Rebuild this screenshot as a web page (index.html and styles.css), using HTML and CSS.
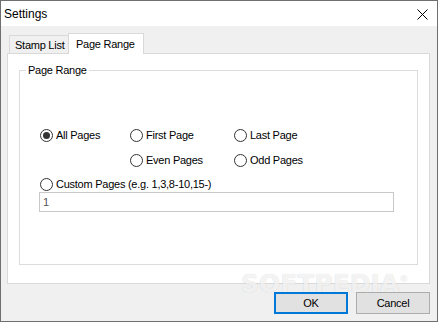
FILE: index.html
```html
<!DOCTYPE html>
<html>
<head>
<meta charset="utf-8">
<link rel="stylesheet" href="styles.css">
</head>
<body>
<div class="window">
  <div class="titlebar">
    <span class="title">Settings</span>
    <svg class="close" width="11" height="11" viewBox="0 0 11 11"><path d="M0.5 0.5L10.5 10.5M10.5 0.5L0.5 10.5" stroke="#000" stroke-width="1" fill="none"/></svg>
  </div>
  <div class="body">
    <div class="tabs">
      <div class="tab">Stamp List</div>
      <div class="tab active">Page Range</div>
    </div>
    <div class="panel">
      <fieldset class="group">
        <legend>Page Range</legend>
        <div class="options">
          <div class="grid">
            <label class="radio"><span class="dot checked"></span>All Pages</label>
            <label class="radio"><span class="dot"></span>First Page</label>
            <label class="radio"><span class="dot"></span>Last Page</label>
            <span></span>
            <label class="radio"><span class="dot"></span>Even Pages</label>
            <label class="radio"><span class="dot"></span>Odd Pages</label>
          </div>
          <label class="radio custom"><span class="dot"></span>Custom Pages (e.g. 1,3,8-10,15-)</label>
          <div class="input">1</div>
        </div>
      </fieldset>
    </div>
    <div class="buttons">
      <div class="btn default">OK</div>
      <div class="btn">Cancel</div>
    </div>
  </div>
  <div class="watermark">SOFTPEDIA<sup>®</sup></div>
</div>
</body>
</html>
```
FILE: styles.css
```css
* { box-sizing: border-box; }
html, body { margin: 0; padding: 0; }
body {
  font-family: "Liberation Sans", Arial, sans-serif;
  font-size: 11px;
  letter-spacing: -0.25px;
  color: #000;
  background: #fff;
}
.window {
  position: relative;
  width: 438px;
  height: 322px;
  border: 1px solid #6f6f6f;
  display: flex;
  flex-direction: column;
  overflow: hidden;
}
.titlebar {
  height: 25px;
  background: #fff;
  display: flex;
  align-items: center;
  justify-content: space-between;
  padding: 0 9px 0 3px;
  flex: none;
}
.title { font-size: 12px; line-height: 14px; margin-top: 1px; letter-spacing: 0; }
.close { display: block; margin-top: 1px; }
.body {
  flex: 1;
  background: #f0f0f0;
  padding: 7px 7px 0 6px;
  display: flex;
  flex-direction: column;
}
.tabs {
  height: 20px;
  display: flex;
  align-items: flex-end;
  padding-left: 2px;
}
.tab {
  height: 18px;
  width: 60px;
  border: 1px solid #d9d9d9;
  border-bottom: none;
  background: #f0f0f0;
  display: flex;
  align-items: center;
  padding-left: 5px;
  line-height: 14px;
  white-space: nowrap;
}
.tab.active {
  height: 21px;
  width: 76px;
  margin-left: -1px;
  margin-bottom: -1px;
  background: #fff;
  position: relative;
  z-index: 1;
  padding-left: 7px;
}
.panel {
  height: 231px;
  background: #fff;
  border: 1px solid #d9d9d9;
  display: flex;
  flex-direction: column;
}
.group {
  flex: 1;
  margin: 8px 11px 18px 11px;
  padding: 0;
  border: 1px solid #dcdcdc;
  min-width: 0;
}
.group legend {
  margin-left: 6px;
  padding: 0 2px;
  line-height: 16px;
  height: 16px;
}
.options {
  padding: 51px 0 0 20px;
}
.grid {
  display: grid;
  grid-template-columns: 90px 104px auto;
  grid-auto-rows: 13px;
  row-gap: 12px;
}
.radio {
  display: flex;
  align-items: center;
  height: 13px;
  line-height: 13px;
  white-space: nowrap;
}
.dot {
  width: 13px;
  height: 13px;
  border: 1px solid #333;
  border-radius: 50%;
  background: #fff;
  margin-right: 3px;
  flex: none;
  display: flex;
  align-items: center;
  justify-content: center;
}
.dot.checked::after {
  content: "";
  width: 7px;
  height: 7px;
  border-radius: 50%;
  background: #333;
}
.custom { margin-top: 11px; }
.input {
  margin-top: 1px;
  margin-left: -1px;
  width: 355px;
  height: 20px;
  border: 1px solid #c8c8c8;
  background: #fff;
  color: #555;
  padding-left: 3px;
  line-height: 18px;
}
.buttons {
  display: flex;
  justify-content: flex-end;
  gap: 8px;
  margin-top: 8px;
}
.btn {
  width: 74px;
  height: 22px;
  border: 1px solid #adadad;
  background: #e1e1e1;
  display: flex;
  align-items: center;
  justify-content: center;
  line-height: 14px;
}
.btn.default {
  border: 2px solid #0078d7;
}
.watermark {
  position: absolute;
  left: 240px;
  top: 273px;
  font-family: "DejaVu Sans", sans-serif;
  font-weight: bold;
  font-size: 25px;
  line-height: 19px;
  letter-spacing: 0;
  color: rgba(255,255,255,0.75);
  text-shadow: 0 0 1px rgba(0,0,0,0.18);
  pointer-events: none;
}
.watermark sup { font-size: 9px; font-weight: normal; vertical-align: 10px; line-height: 0; }
```
